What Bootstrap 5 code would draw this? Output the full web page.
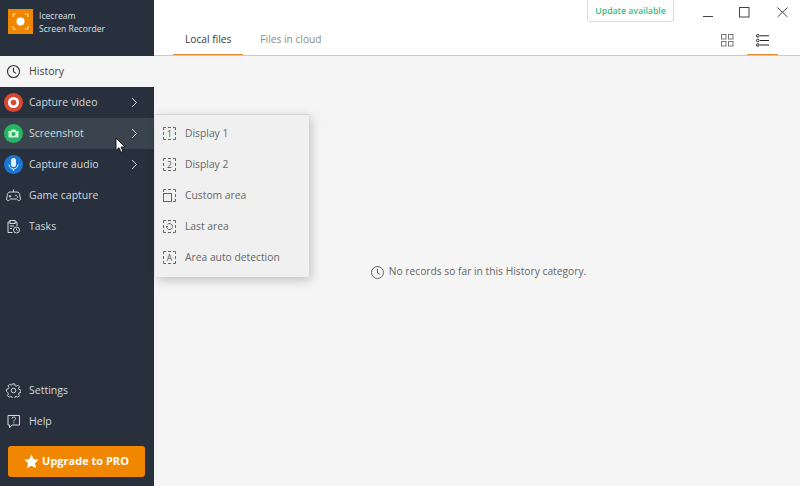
<!DOCTYPE html>
<html lang="en">
<head>
<meta charset="utf-8">
<title>Icecream Screen Recorder</title>
<link rel="stylesheet" href="https://cdn.jsdelivr.net/npm/bootstrap@5.3.0/dist/css/bootstrap.min.css">
<style>
html,body{height:100%;margin:0;overflow:hidden}
body{font-family:"Open Sans","Noto Sans",sans-serif;font-size:10.5px;background:#f5f5f5;color:#555}
.app-shell{width:800px;height:486px;position:relative}
.side-pane{width:154px;background:#27303c;color:#d5d9dd;flex:none}
.brand-row{height:56px;padding:9px 8px 0 8px;gap:6px}
.brand-logo{width:25px;height:25px;background:#f18700;flex:none}
.brand-text{font-size:8.6px;line-height:13px;color:#dfe2e5;padding-top:1px}
.side-item{height:31px;padding:0 4px;gap:6px;color:#d5d9dd;white-space:nowrap}
.side-item.is-current{background:#f5f5f5;color:#444}
.side-item.is-hover{background:#3a444f}
.side-ico{width:19px;height:19px;flex:none;display:flex;align-items:center;justify-content:center}
.side-chev{margin-left:auto;margin-right:12px}
.pro-btn{margin:9px 9px 9px 8px;height:31px;background:#f18700;border-radius:3px;color:#fff;font-weight:700;font-size:11px;gap:3px}
.main-pane{min-width:0}
.top-bar{height:56px;background:#fff;border-bottom:1px solid #c9c9c9;position:relative}
.tab-strip{padding:0 0 0 19px;height:55px;align-items:flex-end}
.tab-link{height:29px;padding:0 12px;color:#8a8a8a;line-height:27px;white-space:nowrap;margin-right:5px;font-size:10.2px}
.tab-link.is-on{color:#3a3a3a;border-bottom:1px solid #e8882c;}
.update-pill{position:absolute;left:433px;top:0;width:87px;height:22px;border:1px solid #bfe8d6;border-top:0;border-radius:0 0 4px 4px;color:#35bd80;font-size:8.7px;font-weight:600;display:flex;align-items:center;justify-content:center;white-space:nowrap;padding-top:2px}
.win-btn{position:absolute;top:6px}
.view-btn{position:absolute;top:32px;width:31px;height:23px;display:flex;justify-content:center;padding-top:2px}
.view-btn.is-on{border-bottom:1px solid #e8882c}
.empty-note{height:430px;padding:2px 0 0 3px;gap:5px;color:#666;white-space:nowrap;font-size:10.25px}
.fly-menu{position:absolute;left:155px;top:114px;width:154px;height:163px;background:#f0f0f0;padding-top:3px;border-top:1px solid #d4d4d4;box-shadow:2px 3px 10px rgba(0,0,0,.22)}
.fly-item{height:31px;padding:0 0 0 8px;gap:9px;color:#666;white-space:nowrap;font-size:10.3px}
.cursor-mark{position:absolute;left:115px;top:137px}
</style>
</head>
<body>
<div class="app-shell d-flex">
  <aside class="side-pane d-flex flex-column">
    <div class="brand-row d-flex align-items-start">
      <div class="brand-logo d-flex align-items-center justify-content-center">
        <svg width="25" height="25" viewBox="0 0 25 25" fill="none"><path d="M5 8V5h3M17 5h3v3M20 17v3h-3M8 20H5v-3" stroke="#ffd9a8" stroke-width="1"/><circle cx="12.5" cy="12.5" r="4" fill="#fff"/></svg>
      </div>
      <div class="brand-text"><div>Icecream</div><div>Screen Recorder</div></div>
    </div>
    <div class="side-item is-current d-flex align-items-center">
      <span class="side-ico"><svg width="15" height="15" viewBox="0 0 15 15" fill="none" stroke="#333" stroke-width="1.1"><circle cx="7.5" cy="7.5" r="6"/><path d="M7.5 3.8v4l2.6 1.6"/></svg></span><span>History</span>
    </div>
    <div class="side-item d-flex align-items-center">
      <span class="side-ico"><svg width="19" height="19" viewBox="0 0 19 19"><circle cx="9.5" cy="9.5" r="9.5" fill="#d9482f"/><circle cx="9.5" cy="9.5" r="5.5" fill="#fff"/><circle cx="9.5" cy="9.5" r="2.8" fill="#d9482f"/></svg></span><span>Capture video</span>
      <svg class="side-chev" width="7" height="11" viewBox="0 0 7 11" fill="none" stroke="#d5d9dd"><path d="M1 1l4.5 4.5L1 10"/></svg>
    </div>
    <div class="side-item is-hover d-flex align-items-center">
      <span class="side-ico"><svg width="19" height="19" viewBox="0 0 19 19"><circle cx="9.5" cy="9.5" r="9.5" fill="#27b563"/><path d="M4.5 7h2.3l1-1.4h3.4l1 1.4h2.3v6.5h-10z" fill="#cdf0da"/><circle cx="9.5" cy="10" r="2" fill="#27b563"/></svg></span><span>Screenshot</span>
      <svg class="side-chev" width="7" height="11" viewBox="0 0 7 11" fill="none" stroke="#d5d9dd"><path d="M1 1l4.5 4.5L1 10"/></svg>
    </div>
    <div class="side-item d-flex align-items-center">
      <span class="side-ico"><svg width="19" height="19" viewBox="0 0 19 19"><circle cx="9.5" cy="9.5" r="9.5" fill="#1a76d2"/><rect x="7" y="3" width="5" height="9" rx="2.5" fill="#e6f1fb"/><path d="M5 9.5a4.500 4.500 0 0 0 9 0M9.500 14v2" fill="none" stroke="#e6f1fb"/></svg></span><span>Capture audio</span>
      <svg class="side-chev" width="7" height="11" viewBox="0 0 7 11" fill="none" stroke="#d5d9dd"><path d="M1 1l4.5 4.5L1 10"/></svg>
    </div>
    <div class="side-item d-flex align-items-center">
      <span class="side-ico"><svg width="15" height="15" viewBox="0 0 15 15" fill="none" stroke="#d5d9dd"><path d="M4 4h7c1.6 0 2.3 1 2.6 2.5l.8 4.500c.2 1.600-1.800 2.300-2.800 1L10.500 11h-6L3.400 12c-1 1.300-3 .6-2.800-1l.8-4.500C1.700 5 2.400 4 4 4zM7.500 4V1.500M4 7v2.500M2.800 8.200h2.500"/><circle cx="10" cy="7.500" r=".4"/><circle cx="11.500" cy="9" r=".4"/></svg></span><span>Game capture</span>
    </div>
    <div class="side-item d-flex align-items-center">
      <span class="side-ico"><svg width="15" height="15" viewBox="0 0 15 15" fill="none" stroke="#d5d9dd"><path d="M6.500 13.500H2V3h2M9 3h2v4"/><rect x="4" y="1.500" width="5" height="3"/><path d="M4 7h4M4 9.500h2"/><circle cx="10.500" cy="11" r="3"/><path d="M10.500 9.500V11l1 .8"/></svg></span><span>Tasks</span>
    </div>
    <div class="side-item d-flex align-items-center mt-auto">
      <span class="side-ico"><svg width="15" height="15" viewBox="0 0 15 15" fill="none" stroke="#d5d9dd"><path d="M6.300 1h2.400l.4 1.800 1.300.6 1.600-1 1.700 1.700-1 1.600.6 1.300 1.800.4v2.400l-1.800.4-.6 1.300 1 1.600-1.700 1.700-1.600-1-1.300.6-.4 1.800H6.300l-.4-1.800-1.300-.6-1.600 1-1.700-1.700 1-1.600-.6-1.300L.4 8.800V6.400l1.800-.4.6-1.300-1-1.600 1.700-1.700 1.600 1 1.300-.6z" transform="translate(.2 -.1) scale(.97)"/><circle cx="7.500" cy="7.500" r="2.300"/></svg></span><span>Settings</span>
    </div>
    <div class="side-item d-flex align-items-center">
      <span class="side-ico"><svg width="15" height="15" viewBox="0 0 15 15" fill="none" stroke="#d5d9dd"><path d="M2 1.500h11.500v9.500H6l-2.500 2.800V11H2z"/><path d="M6 4.500c0-2 3.500-2 3.500 0 0 1.300-1.700 1.300-1.700 2.800M7.800 8.300v1"/></svg></span><span>Help</span>
    </div>
    <div class="pro-btn d-flex align-items-center justify-content-center">
      <svg width="15" height="15" viewBox="0 0 13 13" fill="#fff"><path d="M6.500.5l1.900 4 4.300.5-3.200 3 .9 4.400-3.900-2.200-3.900 2.200.9-4.400-3.200-3 4.300-.5z"/></svg><span>Upgrade to PRO</span>
    </div>
  </aside>
  <main class="main-pane flex-grow-1 d-flex flex-column">
    <header class="top-bar">
      <nav class="tab-strip d-flex">
        <div class="tab-link is-on">Local files</div>
        <div class="tab-link">Files in cloud</div>
      </nav>
      <div class="update-pill">Update available</div>
      <svg class="win-btn" style="left:549px" width="10" height="12" viewBox="0 0 10 12" stroke="#444"><path d="M0 10.500h10"/></svg>
      <svg class="win-btn" style="left:585px" width="11" height="12" viewBox="0 0 11 12" fill="none" stroke="#444"><rect x=".5" y="1.500" width="9.500" height="9.500"/></svg>
      <svg class="win-btn" style="left:623px" width="11" height="12" viewBox="0 0 11 12" stroke="#444"><path d="M.5 1.500l10 9.500M10.500 1.500l-10 9.500"/></svg>
      <div class="view-btn" style="left:558px"><svg width="13" height="13" viewBox="0 0 13 13" fill="none" stroke="#777"><rect x=".5" y=".5" width="4.500" height="4.500"/><rect x="7.500" y=".5" width="4.500" height="4.500"/><rect x=".5" y="7.500" width="4.500" height="4.500"/><rect x="7.500" y="7.500" width="4.500" height="4.500"/></svg></div>
      <div class="view-btn is-on" style="left:593px"><svg width="13" height="13" viewBox="0 0 13 13" fill="none" stroke="#222"><circle cx="1.800" cy="1.800" r="1.300"/><circle cx="1.800" cy="6.500" r="1.300"/><circle cx="1.800" cy="11" r="1.300"/><path d="M4 1.800h9M4 6.500h9M4 11h9"/></svg></div>
    </header>
    <section class="empty-note d-flex align-items-center justify-content-center">
      <svg width="13" height="13" viewBox="0 0 13 13" fill="none" stroke="#666"><circle cx="6.500" cy="6.500" r="6"/><path d="M6.500 3v4l2.400 1.400"/></svg><span>No records so far in this History category.</span>
    </section>
  </main>
  <div class="fly-menu">
    <div class="fly-item d-flex align-items-center"><svg width="13" height="13" viewBox="0 0 13 13" fill="none" stroke="#666"><path d="M.5 3V.5H3M10 .5h2.500V3M12.500 10v2.500H10M3 12.500H.5V10M5 .5h3M5 12.500h3M.5 5v3M12.500 5v3"/><text x="6.500" y="9.700" font-size="8.500" text-anchor="middle" fill="#555" stroke="none" font-family="Open Sans">1</text></svg><span>Display 1</span></div>
    <div class="fly-item d-flex align-items-center"><svg width="13" height="13" viewBox="0 0 13 13" fill="none" stroke="#666"><path d="M.5 3V.5H3M10 .5h2.500V3M12.500 10v2.500H10M3 12.500H.5V10M5 .5h3M5 12.500h3M.5 5v3M12.500 5v3"/><text x="6.500" y="9.700" font-size="8.500" text-anchor="middle" fill="#555" stroke="none" font-family="Open Sans">2</text></svg><span>Display 2</span></div>
    <div class="fly-item d-flex align-items-center"><svg width="13" height="13" viewBox="0 0 13 13" fill="none" stroke="#666"><path d="M.5 3V.5H3M10 .5h2.500V3M12.500 10v2.500H10M5 .5h3M12.500 5v3"/><rect x=".5" y="4.500" width="8" height="8"/></svg><span>Custom area</span></div>
    <div class="fly-item d-flex align-items-center"><svg width="13" height="13" viewBox="0 0 13 13" fill="none" stroke="#666"><path d="M.5 3V.5H3M10 .5h2.500V3M12.500 10v2.500H10M3 12.500H.5V10M5 .5h3M5 12.500h3M.5 5v3M12.500 5v3"/><path d="M3.500 6.500a3 3 0 1 0 1-2.200M3 6.500h2"/></svg><span>Last area</span></div>
    <div class="fly-item d-flex align-items-center"><svg width="13" height="13" viewBox="0 0 13 13" fill="none" stroke="#666"><path d="M.5 3V.5H3M10 .5h2.500V3M12.500 10v2.500H10M3 12.500H.5V10M5 .5h3M5 12.500h3M.5 5v3M12.500 5v3"/><text x="6.500" y="9.700" font-size="8.500" text-anchor="middle" fill="#555" stroke="none" font-family="Open Sans">A</text></svg><span>Area auto detection</span></div>
  </div>
  <svg class="cursor-mark" width="12" height="17" viewBox="0 0 12 17"><path d="M1 1v12.500l3-2.800 2 4.600 2-.9-2-4.400h4z" fill="#fff" stroke="#111" stroke-width=".9"/></svg>
</div>
<script src="https://cdn.jsdelivr.net/npm/bootstrap@5.3.0/dist/js/bootstrap.bundle.min.js"></script>
</body>
</html>
